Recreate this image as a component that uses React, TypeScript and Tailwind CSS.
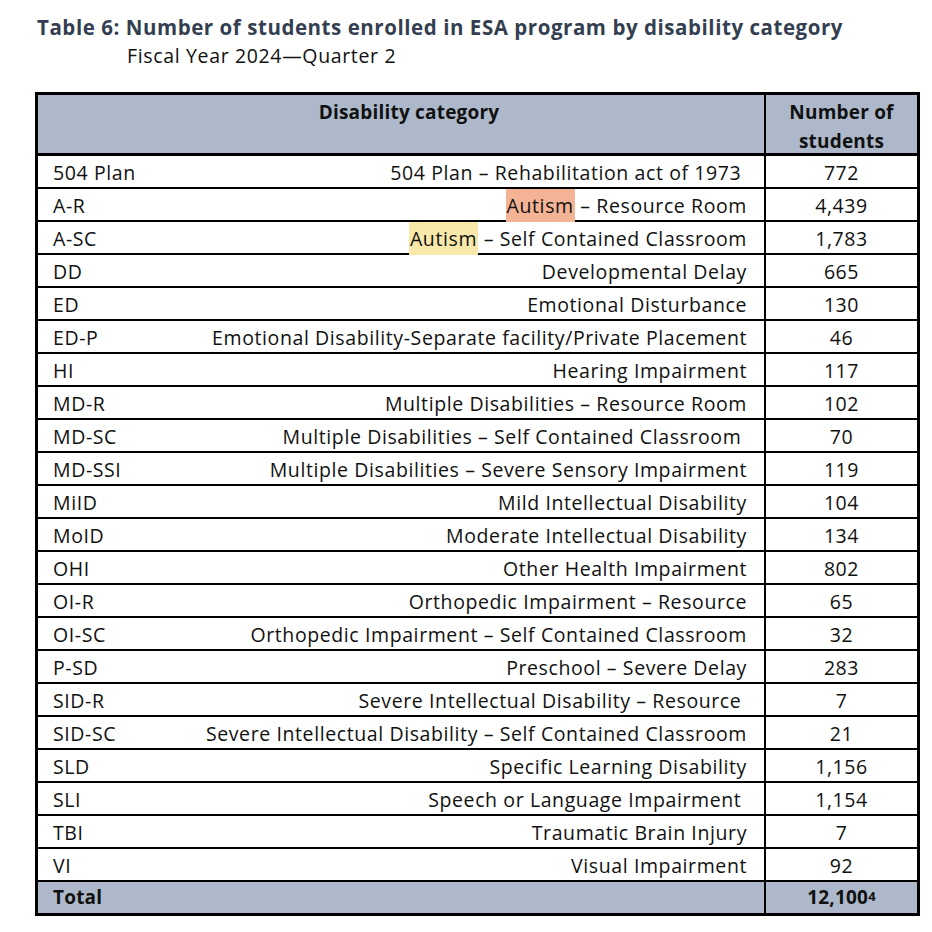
import React from "react";

type Row = { code: string; desc: React.ReactNode; n: string };

const orange = (t: string) => (
  <span className="bg-[#f4b394] px-px py-[3px]">{t}</span>
);
const yellow = (t: string) => (
  <span className="bg-[#f8e8aa] px-px py-[3px]">{t}</span>
);

const rows: Row[] = [
  { code: "504 Plan", desc: "504 Plan – Rehabilitation act of 1973\u00a0", n: "772" },
  { code: "A-R", desc: <>{orange("Autism")} – Resource Room</>, n: "4,439" },
  { code: "A-SC", desc: <>{yellow("Autism")} – Self Contained Classroom</>, n: "1,783" },
  { code: "DD", desc: "Developmental Delay", n: "665" },
  { code: "ED", desc: "Emotional Disturbance", n: "130" },
  { code: "ED-P", desc: "Emotional Disability-Separate facility/Private Placement", n: "46" },
  { code: "HI", desc: "Hearing Impairment", n: "117" },
  { code: "MD-R", desc: "Multiple Disabilities – Resource Room", n: "102" },
  { code: "MD-SC", desc: "Multiple Disabilities – Self Contained Classroom\u00a0", n: "70" },
  { code: "MD-SSI", desc: "Multiple Disabilities – Severe Sensory Impairment", n: "119" },
  { code: "MiID", desc: "Mild Intellectual Disability", n: "104" },
  { code: "MoID", desc: "Moderate Intellectual Disability", n: "134" },
  { code: "OHI", desc: "Other Health Impairment", n: "802" },
  { code: "OI-R", desc: "Orthopedic Impairment – Resource", n: "65" },
  { code: "OI-SC", desc: "Orthopedic Impairment – Self Contained Classroom", n: "32" },
  { code: "P-SD", desc: "Preschool – Severe Delay", n: "283" },
  { code: "SID-R", desc: "Severe Intellectual Disability – Resource\u00a0", n: "7" },
  { code: "SID-SC", desc: "Severe Intellectual Disability – Self Contained Classroom", n: "21" },
  { code: "SLD", desc: "Specific Learning Disability", n: "1,156" },
  { code: "SLI", desc: "Speech or Language Impairment\u00a0", n: "1,154" },
  { code: "TBI", desc: "Traumatic Brain Injury", n: "7" },
  { code: "VI", desc: "Visual Impairment", n: "92" },
];

export default function App() {
  return (
    <div
      className="w-[932px] h-[932px] bg-white text-[#111] overflow-hidden"
      style={{ fontFamily: "'Open Sans', 'Noto Sans', sans-serif" }}
    >
      <div className="pt-[13px] pl-[37px] text-[20.5px] leading-[29px] tracking-[0.55px] font-bold text-[#333f50]">
        Table 6: Number of students enrolled in ESA program by disability category
      </div>
      <div className="pl-[127px] pt-[1px] text-[19.5px] leading-[25px] tracking-[0.65px] text-[#111]">
        Fiscal Year 2024—Quarter 2
      </div>
      <div className="ml-[35px] mt-[24px] w-[885px] border-[3px] border-black text-[19.5px] tracking-[0.6px]">
        <div className="flex h-[61px] bg-[#adb9ca] border-b-[3px] border-black font-bold text-[19px] tracking-[0.2px]">
          <div className="w-[726px] text-center pt-[3px] pl-[16px] leading-[29px]">Disability category</div>
          <div className="w-[153px] border-l-2 border-black text-center pt-[3px] leading-[29px]">
            Number of
            <br />
            students
          </div>
        </div>
        {rows.map((r) => (
          <div key={r.code} className="flex h-[33px] border-b-2 border-black">
            <div className="w-[726px] flex items-center justify-between pl-[15px] pr-[17px] pt-[2px] whitespace-pre">
              <span>{r.code}</span>
              <span>{r.desc}</span>
            </div>
            <div className="w-[153px] border-l-2 border-black flex items-center justify-center pt-[2px]">
              {r.n}
            </div>
          </div>
        ))}
        <div className="flex h-[31px] bg-[#adb9ca] font-bold text-[19px] tracking-[0.2px]">
          <div className="w-[726px] flex items-center pl-[15px]">Total</div>
          <div className="w-[153px] border-l-2 border-black flex items-center justify-center">
            12,100<sup className="text-[13px] relative -top-[2px]">4</sup>
          </div>
        </div>
      </div>
    </div>
  );
}
